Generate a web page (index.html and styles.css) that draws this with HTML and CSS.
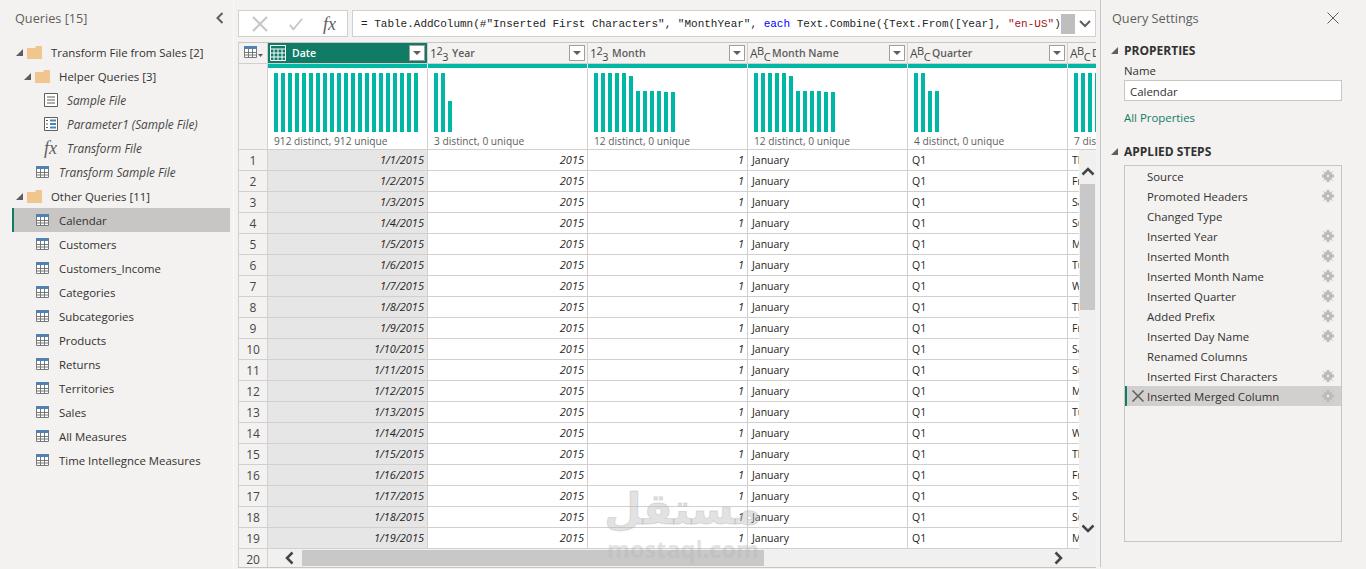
FILE: index.html
```html
<!DOCTYPE html>
<html lang="en">
<head>
    <meta charset="UTF-8">
    <title>Power Query Editor</title>
    <link rel="stylesheet" href="styles.css">
</head>
<body>
    <svg class="defs" width="0" height="0">
        <symbol id="tbl" viewBox="0 0 13 12">
            <rect x="0" y="0" width="13" height="3" fill="#4f81b5"/>
            <path d="M.5 3v8.500h12V3M4.500 3v8M8.500 3v8M1 6.500h11M1 9h11" fill="#fff" stroke="#77787a"/>
        </symbol>
        <symbol id="folder" viewBox="0 0 15 13">
            <path d="M0 2h8l1-2h6v13H0z" fill="#f0c68e"/>
        </symbol>
        <symbol id="gear" viewBox="0 0 12 12">
            <path d="M4.500 0h3v2l1.500 .6L10.500 1l.5 .5-1.500 1.500.6 1.500H12v3h-2l-.6 1.500 1.500 1.500-.5.500L9 9.400 7.500 10v2h-3v-2L3 9.400 1.500 11 1 10.500 2.500 9 1.900 7.500H0v-3h2L2.500 3 1 1.500 1.500 1 3 2.600 4.500 2z" fill="#bdbbb9"/>
            <circle cx="6" cy="6" r="1.200" fill="#f3f2f1"/>
        </symbol>
        <symbol id="tri" viewBox="0 0 7 7">
            <path d="M7 0v7H0z" fill="#605e5c"/>
        </symbol>
    </svg>

    <aside class="queries">
        <div class="panel-head">
            <span class="panel-title">Queries [15]</span>
            <svg class="collapse" width="8" height="12" viewBox="0 0 8 12"><path d="M6.500 1L1.500 6l5 5" fill="none" stroke="#605e5c" stroke-width="2"/></svg>
        </div>
        <ul class="query-list">
            <li class="q lvl1"><svg class="tri" width="7" height="7"><use href="#tri"/></svg><svg class="folder" width="15" height="13"><use href="#folder"/></svg><span>Transform File from Sales [2]</span></li>
            <li class="q lvl2"><svg class="tri" width="7" height="7"><use href="#tri"/></svg><svg class="folder" width="15" height="13"><use href="#folder"/></svg><span>Helper Queries [3]</span></li>
            <li class="q lvl3 ital">
                <svg class="qicon" width="14" height="14" viewBox="0 0 14 14"><path d="M.5 .5h13v13H.500z" fill="#fff" stroke="#605e5c"/><path d="M3 4h8M3 7h8M3 10h8" stroke="#605e5c"/></svg>
                <span>Sample File</span>
            </li>
            <li class="q lvl3 ital">
                <svg class="qicon" width="14" height="14" viewBox="0 0 14 14"><path d="M.5 .5h13v13H.500z" fill="#fff" stroke="#605e5c"/><path d="M6 3.500h6M6 7h6M6 10.500h6" stroke="#4f81b5" stroke-width="2"/><path d="M2 3.500h2M2 7h2M2 10.500h2" stroke="#605e5c"/></svg>
                <span>Parameter1 (Sample File)</span>
            </li>
            <li class="q lvl3 ital"><span class="fx qicon">fx</span><span>Transform File</span></li>
            <li class="q lvl2b ital"><svg class="qicon" width="13" height="12"><use href="#tbl"/></svg><span>Transform Sample File</span></li>
            <li class="q lvl1"><svg class="tri" width="7" height="7"><use href="#tri"/></svg><svg class="folder" width="15" height="13"><use href="#folder"/></svg><span>Other Queries [11]</span></li>
            <li class="q lvl2b active"><svg class="qicon" width="13" height="12"><use href="#tbl"/></svg><span>Calendar</span></li>
            <li class="q lvl2b"><svg class="qicon" width="13" height="12"><use href="#tbl"/></svg><span>Customers</span></li>
            <li class="q lvl2b"><svg class="qicon" width="13" height="12"><use href="#tbl"/></svg><span>Customers_Income</span></li>
            <li class="q lvl2b"><svg class="qicon" width="13" height="12"><use href="#tbl"/></svg><span>Categories</span></li>
            <li class="q lvl2b"><svg class="qicon" width="13" height="12"><use href="#tbl"/></svg><span>Subcategories</span></li>
            <li class="q lvl2b"><svg class="qicon" width="13" height="12"><use href="#tbl"/></svg><span>Products</span></li>
            <li class="q lvl2b"><svg class="qicon" width="13" height="12"><use href="#tbl"/></svg><span>Returns</span></li>
            <li class="q lvl2b"><svg class="qicon" width="13" height="12"><use href="#tbl"/></svg><span>Territories</span></li>
            <li class="q lvl2b"><svg class="qicon" width="13" height="12"><use href="#tbl"/></svg><span>Sales</span></li>
            <li class="q lvl2b"><svg class="qicon" width="13" height="12"><use href="#tbl"/></svg><span>All Measures</span></li>
            <li class="q lvl2b"><svg class="qicon" width="13" height="12"><use href="#tbl"/></svg><span>Time Intellegnce Measures</span></li>
        </ul>
    </aside>

    <main class="center">
        <div class="formula-row">
            <div class="formula-btns">
                <svg width="16" height="16" viewBox="0 0 16 16"><path d="M1 1l14 14M15 1L1 15" stroke="#c8c6c4" stroke-width="2"/></svg>
                <svg width="14" height="14" viewBox="0 0 16 16"><path d="M1 9l4 5L15 2" fill="none" stroke="#c8c6c4" stroke-width="2"/></svg>
                <span class="fx">fx</span>
            </div>
            <div class="formula">
                <code class="formula-text">= Table.AddColumn(#"Inserted First Characters", "MonthYear", <span class="kw">each</span> Text.Combine({Text.From([Year], <span class="str">"en-US"</span>)</code>
                <span class="sel"></span>
                <svg class="chev" width="12" height="8" viewBox="0 0 12 8"><path d="M1 1l5 5 5-5" fill="none" stroke="#605e5c" stroke-width="2"/></svg>
            </div>
        </div>

        <div class="grid-wrap">
            <table class="grid">
                <colgroup>
                    <col class="c-num"><col class="c-col"><col class="c-col"><col class="c-col"><col class="c-col"><col class="c-col"><col class="c-col">
                </colgroup>
                <thead>
                    <tr class="head">
                        <th class="corner">
                            <svg width="20" height="12" viewBox="0 0 20 12"><use href="#tbl" width="13" height="12"/><path d="M14 8h5l-2.500 3z" fill="#605e5c"/></svg>
                        </th>
                        <th class="sel-head"><div class="h">
                            <svg width="16" height="16" viewBox="0 0 16 16"><path d="M.5 .5h15v15H.500zM.5 4h15M4 4v11.500M8 4v11.500M12 4v11.500M.5 8h15M.5 12h15" fill="none" stroke="#fff"/></svg>
                            <span class="h-name">Date</span><span class="filter"></span>
                        </div></th>
                        <th><div class="h"><span class="type">1<sup>2</sup><sub>3</sub></span><span class="h-name typed">Year</span><span class="filter"></span></div></th>
                        <th><div class="h"><span class="type">1<sup>2</sup><sub>3</sub></span><span class="h-name typed">Month</span><span class="filter"></span></div></th>
                        <th><div class="h"><span class="type">A<sup>B</sup><sub>C</sub></span><span class="h-name typed">Month Name</span><span class="filter"></span></div></th>
                        <th><div class="h"><span class="type">A<sup>B</sup><sub>C</sub></span><span class="h-name typed">Quarter</span><span class="filter"></span></div></th>
                        <th><div class="h"><span class="type">A<sup>B</sup><sub>C</sub></span><span class="h-name typed">Day Name</span><span class="filter"></span></div></th>
                    </tr>
                    <tr class="quality"><td class="num"></td><td></td><td></td><td></td><td></td><td></td><td></td></tr>
                    <tr class="profile">
                        <td class="num"></td>
                        <td><div class="bars"><i style="height:59px"></i><i style="height:59px"></i><i style="height:59px"></i><i style="height:59px"></i><i style="height:59px"></i><i style="height:59px"></i><i style="height:59px"></i><i style="height:59px"></i><i style="height:59px"></i><i style="height:59px"></i><i style="height:59px"></i><i style="height:59px"></i><i style="height:59px"></i><i style="height:59px"></i><i style="height:59px"></i><i style="height:59px"></i><i style="height:59px"></i><i style="height:59px"></i><i style="height:59px"></i><i style="height:59px"></i><i style="height:59px"></i></div><p class="stat">912 distinct, 912 unique</p></td>
                        <td><div class="bars"><i style="height:59px"></i><i style="height:59px"></i><i style="height:31px"></i></div><p class="stat">3 distinct, 0 unique</p></td>
                        <td><div class="bars"><i style="height:59px"></i><i style="height:59px"></i><i style="height:59px"></i><i style="height:59px"></i><i style="height:59px"></i><i style="height:56px"></i><i style="height:41px"></i><i style="height:41px"></i><i style="height:41px"></i><i style="height:41px"></i><i style="height:40px"></i><i style="height:40px"></i></div><p class="stat">12 distinct, 0 unique</p></td>
                        <td><div class="bars"><i style="height:59px"></i><i style="height:59px"></i><i style="height:59px"></i><i style="height:59px"></i><i style="height:59px"></i><i style="height:56px"></i><i style="height:41px"></i><i style="height:41px"></i><i style="height:41px"></i><i style="height:41px"></i><i style="height:40px"></i><i style="height:40px"></i></div><p class="stat">12 distinct, 0 unique</p></td>
                        <td><div class="bars"><i style="height:59px"></i><i style="height:59px"></i><i style="height:41px"></i><i style="height:41px"></i></div><p class="stat">4 distinct, 0 unique</p></td>
                        <td><div class="bars"><i style="height:59px"></i><i style="height:59px"></i><i style="height:59px"></i><i style="height:59px"></i><i style="height:59px"></i><i style="height:59px"></i><i style="height:59px"></i></div><p class="stat">7 distinct, 0 unique</p></td>
                    </tr>
                </thead>
                <tbody>
                    <tr><td class="num">1</td><td class="date">1/1/2015</td><td class="n">2015</td><td class="n">1</td><td>January</td><td>Q1</td><td>Thursday</td></tr>
                    <tr><td class="num">2</td><td class="date">1/2/2015</td><td class="n">2015</td><td class="n">1</td><td>January</td><td>Q1</td><td>Friday</td></tr>
                    <tr><td class="num">3</td><td class="date">1/3/2015</td><td class="n">2015</td><td class="n">1</td><td>January</td><td>Q1</td><td>Saturday</td></tr>
                    <tr><td class="num">4</td><td class="date">1/4/2015</td><td class="n">2015</td><td class="n">1</td><td>January</td><td>Q1</td><td>Sunday</td></tr>
                    <tr><td class="num">5</td><td class="date">1/5/2015</td><td class="n">2015</td><td class="n">1</td><td>January</td><td>Q1</td><td>Monday</td></tr>
                    <tr><td class="num">6</td><td class="date">1/6/2015</td><td class="n">2015</td><td class="n">1</td><td>January</td><td>Q1</td><td>Tuesday</td></tr>
                    <tr><td class="num">7</td><td class="date">1/7/2015</td><td class="n">2015</td><td class="n">1</td><td>January</td><td>Q1</td><td>Wednesday</td></tr>
                    <tr><td class="num">8</td><td class="date">1/8/2015</td><td class="n">2015</td><td class="n">1</td><td>January</td><td>Q1</td><td>Thursday</td></tr>
                    <tr><td class="num">9</td><td class="date">1/9/2015</td><td class="n">2015</td><td class="n">1</td><td>January</td><td>Q1</td><td>Friday</td></tr>
                    <tr><td class="num">10</td><td class="date">1/10/2015</td><td class="n">2015</td><td class="n">1</td><td>January</td><td>Q1</td><td>Saturday</td></tr>
                    <tr><td class="num">11</td><td class="date">1/11/2015</td><td class="n">2015</td><td class="n">1</td><td>January</td><td>Q1</td><td>Sunday</td></tr>
                    <tr><td class="num">12</td><td class="date">1/12/2015</td><td class="n">2015</td><td class="n">1</td><td>January</td><td>Q1</td><td>Monday</td></tr>
                    <tr><td class="num">13</td><td class="date">1/13/2015</td><td class="n">2015</td><td class="n">1</td><td>January</td><td>Q1</td><td>Tuesday</td></tr>
                    <tr><td class="num">14</td><td class="date">1/14/2015</td><td class="n">2015</td><td class="n">1</td><td>January</td><td>Q1</td><td>Wednesday</td></tr>
                    <tr><td class="num">15</td><td class="date">1/15/2015</td><td class="n">2015</td><td class="n">1</td><td>January</td><td>Q1</td><td>Thursday</td></tr>
                    <tr><td class="num">16</td><td class="date">1/16/2015</td><td class="n">2015</td><td class="n">1</td><td>January</td><td>Q1</td><td>Friday</td></tr>
                    <tr><td class="num">17</td><td class="date">1/17/2015</td><td class="n">2015</td><td class="n">1</td><td>January</td><td>Q1</td><td>Saturday</td></tr>
                    <tr><td class="num">18</td><td class="date">1/18/2015</td><td class="n">2015</td><td class="n">1</td><td>January</td><td>Q1</td><td>Sunday</td></tr>
                    <tr><td class="num">19</td><td class="date">1/19/2015</td><td class="n">2015</td><td class="n">1</td><td>January</td><td>Q1</td><td>Monday</td></tr>
                    <tr><td class="num">20</td><td class="date"></td><td class="n"></td><td class="n"></td><td></td><td></td><td></td></tr>
                </tbody>
            </table>

            <div class="vscroll">
                <svg class="v-up" width="14" height="9" viewBox="0 0 14 9"><path d="M1.500 7.500L7 2l5.500 5.500" fill="none" stroke="#444" stroke-width="2.500"/></svg>
                <div class="v-thumb"></div>
                <svg class="v-down" width="14" height="9" viewBox="0 0 14 9"><path d="M1.500 1.500L7 7l5.500-5.500" fill="none" stroke="#444" stroke-width="2.500"/></svg>
            </div>
            <div class="hscroll">
                <svg class="h-left" width="9" height="14" viewBox="0 0 9 14"><path d="M7.500 1.500L2 7l5.500 5.500" fill="none" stroke="#444" stroke-width="2.500"/></svg>
                <div class="h-thumb"></div>
                <svg class="h-right" width="9" height="14" viewBox="0 0 9 14"><path d="M1.500 1.500L7 7l-5.500 5.500" fill="none" stroke="#444" stroke-width="2.500"/></svg>
            </div>

            <div class="watermark">
                <div class="wm-ar" dir="rtl">مستقل</div>
                <div class="wm-en">mostaql.com</div>
            </div>
        </div>
    </main>

    <aside class="settings">
        <div class="panel-head settings-head">
            <span class="panel-title">Query Settings</span>
            <svg width="12" height="12" viewBox="0 0 12 12"><path d="M.5 .5l11 11M11.500 .5l-11 11" stroke="#605e5c"/></svg>
        </div>
        <h3 class="sec-title"><svg class="tri" width="7" height="7"><use href="#tri"/></svg>PROPERTIES</h3>
        <div class="prop">
            <label class="name-label">Name</label>
            <div class="name-input">Calendar</div>
            <a class="all-props">All Properties</a>
        </div>
        <h3 class="sec-title steps-title"><svg class="tri" width="7" height="7"><use href="#tri"/></svg>APPLIED STEPS</h3>
        <ul class="steps">
            <li class="step"><span>Source</span><svg width="12" height="12"><use href="#gear"/></svg></li>
            <li class="step"><span>Promoted Headers</span><svg width="12" height="12"><use href="#gear"/></svg></li>
            <li class="step"><span>Changed Type</span></li>
            <li class="step"><span>Inserted Year</span><svg width="12" height="12"><use href="#gear"/></svg></li>
            <li class="step"><span>Inserted Month</span><svg width="12" height="12"><use href="#gear"/></svg></li>
            <li class="step"><span>Inserted Month Name</span><svg width="12" height="12"><use href="#gear"/></svg></li>
            <li class="step"><span>Inserted Quarter</span><svg width="12" height="12"><use href="#gear"/></svg></li>
            <li class="step"><span>Added Prefix</span><svg width="12" height="12"><use href="#gear"/></svg></li>
            <li class="step"><span>Inserted Day Name</span><svg width="12" height="12"><use href="#gear"/></svg></li>
            <li class="step"><span>Renamed Columns</span></li>
            <li class="step"><span>Inserted First Characters</span><svg width="12" height="12"><use href="#gear"/></svg></li>
            <li class="step active">
                <svg class="del" width="12" height="12" viewBox="0 0 12 12"><path d="M.5 .5l11 11M11.500 .5l-11 11" stroke="#605e5c" stroke-width="1.500"/></svg>
                <span>Inserted Merged Column</span><svg width="12" height="12"><use href="#gear"/></svg>
            </li>
        </ul>
    </aside>
</body>
</html>
```

FILE: styles.css
```css
* {
    margin: 0;
    padding: 0;
    box-sizing: border-box;
}
html, body {
    height: 569px;
    overflow: hidden;
}
body {
    display: flex;
    background-color: #f3f2f1;
    color: #323130;
    font-family: "Open Sans", "Noto Sans", sans-serif;
    font-size: 11.4px;
}
ul {
    list-style: none;
}
.defs {
    position: absolute;
}

/* panel izquierdo */
.queries {
    width: 234px;
    flex: none;
    border-right: 1px solid #faf9f8;
}
.panel-head {
    display: flex;
    align-items: center;
    justify-content: space-between;
    height: 36px;
    padding: 0 9px 0 15px;
}
.panel-title {
    font-size: 12.7px;
    color: #605e5c;
}
.query-list {
    margin: 4px 3px 0 12px;
}
.q {
    display: flex;
    align-items: center;
    height: 24px;
}
.q .tri {
    margin-right: 4px;
    flex: none;
}
.q .folder {
    margin-right: 9px;
    flex: none;
}
.lvl1 {
    padding-left: 4px;
}
.lvl2 {
    padding-left: 12px;
}
.lvl3 {
    padding-left: 32px;
}
.lvl2b {
    padding-left: 24px;
}
.lvl3 .qicon {
    width: 14px;
    margin-right: 9px;
    flex: none;
}
.lvl2b .qicon {
    margin-right: 10px;
    flex: none;
}
.ital {
    font-style: italic;
    font-size: 11.8px;
    color: #484644;
}
.active {
    background-color: #c8c6c4;
}
.q.active {
    border-left: 2px solid #107c66;
    padding-left: 22px;
}
.fx {
    font-family: "Liberation Serif", serif;
    font-style: italic;
    font-size: 18px;
    color: #605e5c;
    line-height: 1;
}

/* centro */
.center {
    width: 866px;
    flex: none;
    padding: 10px 4px 0 4px;
    display: flex;
    flex-direction: column;
    gap: 5px;
}
.formula-row {
    display: flex;
    gap: 4px;
    height: 27px;
    flex: none;
}
.formula-btns {
    width: 110px;
    background-color: #fff;
    border: 1px solid #d2d0ce;
    display: flex;
    align-items: center;
    justify-content: space-between;
    padding: 0 11px 0 13px;
}
.formula {
    flex: 1;
    background-color: #fff;
    border: 1px solid #d2d0ce;
    display: flex;
    align-items: center;
    padding-left: 8px;
    min-width: 0;
}
.formula-text {
    font-family: "Liberation Mono", monospace;
    font-size: 11px;
    white-space: pre;
    color: #252423;
}
.kw {
    color: #0000ff;
}
.str {
    color: #a31515;
}
.sel {
    width: 14px;
    height: 20px;
    background-color: #bebebe;
    flex: none;
}
.chev {
    margin-left: 4px;
    flex: none;
}

/* tabla */
.grid-wrap {
    position: relative;
    height: 526px;
    overflow: hidden;
    border-top: 1px solid #c8c6c4;
    border-bottom: 1px solid #c8c6c4;
    background-color: #fff;
}
.grid {
    table-layout: fixed;
    border-collapse: separate;
    border-spacing: 0;
    width: 990px;
}
.c-num {
    width: 30px;
}
.c-col {
    width: 160px;
}
.grid td, .grid th {
    border-right: 1px solid #d2d0ce;
    border-bottom: 1px solid #d2d0ce;
    font-weight: normal;
    overflow: hidden;
    white-space: nowrap;
}
.head th {
    height: 21px;
    background-color: #f3f2f1;
    text-align: left;
    color: #605e5c;
    font-weight: 600;
}
.corner {
    border-left: 1px solid #d2d0ce;
    padding-left: 5px;
}
.h {
    display: flex;
    align-items: center;
    height: 20px;
    padding: 0 2px;
}
.h-name {
    flex: 1;
    font-size: 10.5px;
    margin-left: 6px;
}
.h-name.typed {
    margin-left: 2px;
}
.head .sel-head {
    background-color: #107c66;
    color: #fff;
}
.filter {
    width: 16px;
    height: 16px;
    background-color: #fff;
    border: 1px solid #a19f9d;
    position: relative;
    flex: none;
}
.filter::after {
    content: "";
    position: absolute;
    left: 3px;
    top: 5px;
    border: 4px solid transparent;
    border-top: 4px solid #605e5c;
    border-bottom: 0;
}
.type {
    font-size: 12px;
    color: #484644;
    width: 20px;
    line-height: 1;
    font-weight: normal;
    letter-spacing: -0.5px;
    flex: none;
}
.type sup, .type sub {
    font-size: 11px;
    line-height: 1;
}
.type sup {
    vertical-align: 3px;
}
.type sub {
    vertical-align: -3px;
}
.quality td {
    height: 4px;
    background-color: #00b7a6;
    border-right-color: #fff;
    border-bottom: 0;
}
.quality .num {
    background-color: #f3f2f1;
    border-right-color: #d2d0ce;
}
.profile td {
    height: 82px;
    padding: 5px 0 0 6px;
    vertical-align: top;
}
.profile .num, .grid .num {
    background-color: #f3f2f1;
    text-align: center;
    color: #484644;
    border-left: 1px solid #d2d0ce;
}
.profile .num {
    padding: 0;
}
.bars {
    display: flex;
    align-items: flex-end;
    gap: 3px;
    height: 59px;
}
.bars i {
    display: block;
    width: 4px;
    flex: none;
    background-color: #00b7a6;
}
.stat {
    font-size: 10.2px;
    line-height: 14px;
    margin-top: 2px;
    color: #605e5c;
}
tbody td {
    height: 21px;
    padding: 1px 4px 0;
    line-height: 18px;
    vertical-align: top;
    color: #252423;
    font-size: 10.5px;
}
tbody .num {
    font-size: 12px;
    padding: 2px 0 0;
}
.grid .date {
    background-color: #e6e6e6;
    text-align: right;
    font-style: italic;
    font-size: 11px;
    padding-right: 3px;
}
.grid .n {
    text-align: right;
    font-style: italic;
    font-size: 11px;
    padding-right: 3px;
}

/* marca de agua y barras de desplazamiento, encima de la tabla */
.watermark {
    position: absolute;
    left: 360px;
    top: 438px;
    width: 170px;
    text-align: center;
    color: rgba(185, 185, 185, 0.42);
    pointer-events: none;
}
.wm-ar {
    font-family: "DejaVu Sans", sans-serif;
    font-weight: bold;
    font-size: 43px;
    line-height: 56px;
    -webkit-text-stroke: 1px rgba(185, 185, 185, 0.42);
}
.wm-en {
    font-size: 23.5px;
    line-height: 24px;
    font-weight: 700;
}
.vscroll {
    position: absolute;
    right: 0;
    top: 107px;
    bottom: 0;
    width: 17px;
    background-color: #f0f0f0;
    display: flex;
    flex-direction: column;
    align-items: center;
}
.v-up {
    margin-top: 17px;
    flex: none;
}
.v-thumb {
    width: 15px;
    height: 126px;
    margin-top: 8px;
    background-color: #c8c8c8;
}
.v-down {
    margin-top: 214px;
    flex: none;
}
.hscroll {
    position: absolute;
    left: 30px;
    right: 0;
    bottom: 0;
    height: 18px;
    background-color: #f0f0f0;
    display: flex;
    align-items: center;
}
.h-left {
    margin-left: 17px;
    flex: none;
}
.h-thumb {
    width: 462px;
    height: 16px;
    margin-left: 8px;
    background-color: #c8c8c8;
}
.h-right {
    margin-left: 290px;
    flex: none;
}

/* panel derecho */
.settings {
    flex: 1;
    height: 567px;
    border-left: 1px solid #c8c6c4;
    padding: 0 24px 0 11px;
}
.settings-head {
    padding: 0 3px 0 0;
}
.sec-title {
    display: flex;
    align-items: center;
    gap: 6px;
    font-size: 12px;
    font-weight: 700;
    color: #323130;
    margin: 6px 0 0 -1px;
    height: 16px;
}
.prop {
    padding-left: 12px;
    margin-top: 5px;
}
.name-label {
    display: block;
    line-height: 16px;
}
.name-input {
    height: 21px;
    margin-top: 1px;
    background-color: #fff;
    border: 1px solid #c8c6c4;
    padding: 3px 5px;
    line-height: 15px;
}
.all-props {
    display: block;
    margin-top: 9px;
    color: #107c66;
}
.steps-title {
    margin-top: 18px;
}
.steps {
    margin: 6px 0 0 12px;
    height: 377px;
    border: 1px solid #c8c6c4;
}
.step {
    position: relative;
    display: flex;
    align-items: center;
    justify-content: space-between;
    height: 20px;
    padding: 0 7px 0 22px;
}
.step.active {
    border-left: 2px solid #107c66;
    padding-left: 20px;
    background-color: #d2d0ce;
}
.del {
    position: absolute;
    left: 5px;
    top: 4px;
}
.tri {
    flex: none;
}
```
